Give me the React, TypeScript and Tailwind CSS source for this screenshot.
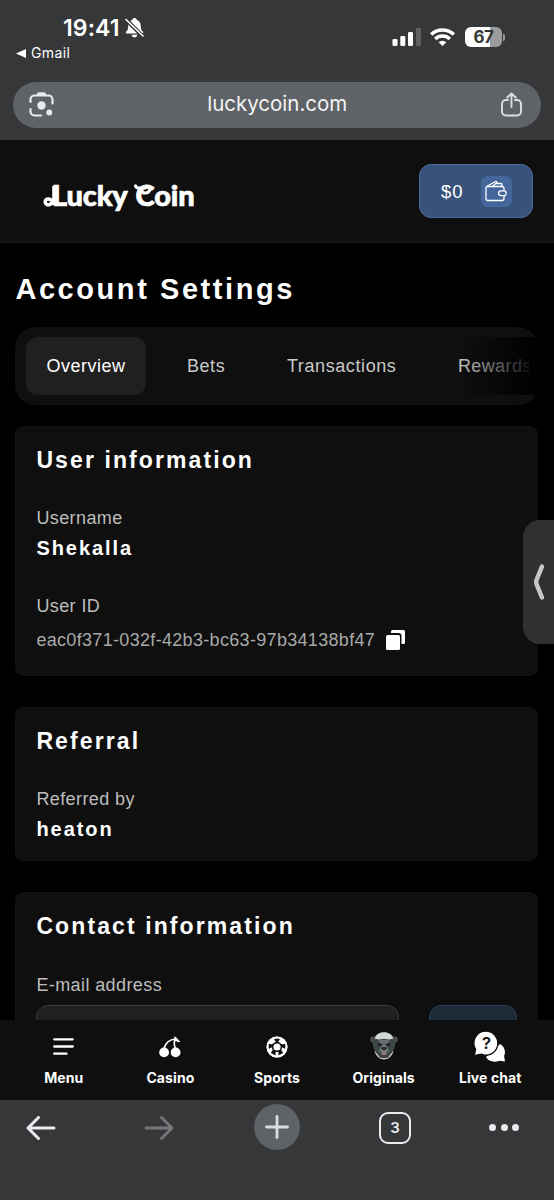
import type { ReactNode } from "react";

const BODY = "font-['Liberation_Sans',sans-serif]";

function StatusBar() {
  return (
    <div className="flex h-[81.500px] justify-between font-['Inter',sans-serif] text-white">
      <div className="pl-4 pt-[13px]">
        <div className="flex items-center pl-[47px]">
          <span className="w-[57px] text-[23px] font-semibold leading-[30px] tracking-[0.1px]">19:41</span>
          <svg className="ml-[5px]" width="19" height="20" viewBox="0 0 19 20">
            <path
              d="M9.5 0c1.1 0 2 .7 2.2 1.7 2.5.9 3.9 3 4 5.700.1 3.500.7 4.800 2.100 6.200.8.8.4 1.900-.7 1.900H1.900C.8 15.500.4 14.400 1.200 13.600c1.400-1.400 2-2.700 2.100-6.200.1-2.700 1.500-4.800 4-5.700C7.500.7 8.400 0 9.500 0zM6.700 16.800h5.600c-.2 1.700-1.300 2.800-2.800 2.800s-2.600-1.100-2.800-2.800z"
              fill="#fff"
            />
            <path d="M0.500 1L18 18.500" stroke="#363739" strokeWidth="4" />
            <path d="M1 1.500L18 18" stroke="#fff" strokeWidth="1.600" strokeLinecap="round" />
          </svg>
        </div>
        <div className="flex items-center text-[14px] leading-5">
          <svg width="10" height="9" viewBox="0 0 10 9">
            <path d="M0 4.500L10 0V9z" fill="#fff" />
          </svg>
          <span className="ml-[5px] tracking-[0.4px]">Gmail</span>
        </div>
      </div>

      <div className="mt-[27px] flex h-5 items-center pr-[49px]">
        <svg width="29" height="18" viewBox="0 0 29 18">
          <rect x="0.500" y="11" width="5" height="7" rx="1.300" fill="#fff" />
          <rect x="8.300" y="8" width="5" height="10" rx="1.300" fill="#fff" />
          <rect x="16" y="4" width="5" height="14" rx="1.300" fill="#fff" />
          <rect x="24" y="0" width="5" height="18" rx="1.300" fill="#5e5f61" />
        </svg>
        <svg className="ml-[9px]" width="25" height="18" viewBox="0 0 25 18">
          <g fill="none" stroke="#fff" strokeWidth="3.500">
            <path d="M1.200 6.600a16.200 16.200 0 0 1 22.600 0" />
            <path d="M5.200 11a10.400 10.400 0 0 1 14.600 0" />
          </g>
          <path d="M8.600 14.200a5.700 5.700 0 0 1 7.800 0l-3.900 3.800z" fill="#fff" />
        </svg>
        <div className="ml-[10px] flex h-5 w-[37px] items-center justify-center rounded-[6px] bg-linear-to-r from-white from-68% to-[#9b9c9e] to-68% pt-px text-[17px] font-bold tracking-[-0.5px] text-[#363739]">
          67
        </div>
        <div className="ml-px h-[7px] w-[2px] rounded-r-full bg-[#9b9c9e]" />
      </div>
    </div>
  );
}

function AddressBar() {
  return (
    <div className="mx-[13px] flex h-[46px] items-center justify-between rounded-full bg-[#5f6266] pl-4 pr-[19.500px]">
      <svg width="25" height="25" viewBox="0 0 25 25" fill="none">
        <g stroke="#e8eaee" strokeWidth="2.200" strokeLinecap="round">
          <path d="M1.500 10V7.500A4 4 0 0 1 5.500 3.500H19.500A4 4 0 0 1 23.500 7.500V11.500" />
          <path d="M1.500 17V19.500A4 4 0 0 0 5.500 23.500H12" />
        </g>
        <path d="M7.500 3l1-2q.4-.8 1.300-.8h5.400q.9 0 1.300.8l1 2z" fill="#e8eaee" />
        <circle cx="12.500" cy="13.500" r="4.200" fill="#e8eaee" />
        <circle cx="20.300" cy="20.500" r="2.900" fill="#e8eaee" />
      </svg>
      <span className="pb-px font-['Inter',sans-serif] text-[20.500px] text-[#f1f2f4]">luckycoin.com</span>
      <svg width="21" height="25" viewBox="0 0 21 25" fill="none" stroke="#dcdee2" strokeWidth="1.900" strokeLinecap="round" strokeLinejoin="round">
        <path d="M7 8H5a4 4 0 0 0-4 4v7.500a4 4 0 0 0 4 4h11a4 4 0 0 0 4-4V12a4 4 0 0 0-4-4h-2" />
        <path d="M10.500 15V1.500M6.300 5.500L10.500 1.300l4.200 4.200" />
      </svg>
    </div>
  );
}

function Logo() {
  return (
    <div className="relative flex items-baseline pl-[9px] font-['Lato',sans-serif] text-[29px] font-black leading-9 tracking-[-0.150px] text-white [-webkit-text-stroke:0.7px_white]">
      {/* Swash strokes that decorate the two capitals */}
      <svg className="absolute left-0 top-[6px]" width="150" height="26" viewBox="0 0 150 26" fill="none" stroke="#fff" strokeLinecap="round">
        <path d="M11 4V15C11 22 2.200 24 2.200 18.800C2.200 14.800 8 15 11.500 20.500" strokeWidth="3.600" />
        <path d="M92.500 3C94 6 98 5.500 100.500 4C104.500 1.800 108 4 106.500 7.500C105 10.500 100 11 98.500 8" strokeWidth="3.200" />
      </svg>
      <span>Lucky</span>
      <span className="ml-[8px]">Coin</span>
    </div>
  );
}

function SiteHeader() {
  return (
    <header className="flex h-[103px] shrink-0 items-center justify-between border-b border-[#191919] bg-[#0f0f0f] pl-[43px] pr-[21px]">
      <div className="pt-2">
        <Logo />
      </div>
      <button className="flex h-[54px] w-[114px] items-center justify-between rounded-[12px] border border-[#4e6d9c] bg-[#375379] pl-[21px] pr-[20.500px]">
        <span className={`${BODY} pt-px text-[18.500px] tracking-[1px] text-white`}>$0</span>
        <span className="flex size-[31px] items-center justify-center rounded-[7px] bg-[#45669a]">
          <svg width="22" height="22" viewBox="0 0 22 22" fill="none" stroke="#fff" strokeWidth="1.300" strokeLinejoin="round">
            <path d="M19 11V8.500a2 2 0 0 0-2-2H2.500a1.500 1.500 0 0 0-1.500 1.500V18.500a2 2 0 0 0 2 2H17a2 2 0 0 0 2-2V15.700" />
            <path d="M16 10.800h3.300a1.700 1.700 0 0 1 1.700 1.700v1.400a1.700 1.700 0 0 1-1.700 1.700H16a2.400 2.400 0 0 1 0-4.800z" />
            <path d="M2 6.300L10.500 1.500a1 1 0 0 1 1.300.5l.8 1.500M8 6.300l2.500-2.800h5.500a1 1 0 0 1 1 1v1.800" />
          </svg>
        </span>
      </button>
    </header>
  );
}

function Tabs() {
  return (
    <nav className={`${BODY} relative flex h-[78px] w-[522.500px] items-center overflow-hidden rounded-[20px] bg-[#0f0f0f] pl-[10.500px] text-[18px] text-[#c9c9c9]`}>
      <span className="flex h-[58px] w-[120px] shrink-0 items-center justify-center rounded-[12px] bg-[#202020] pt-px tracking-[0.500px] text-white">
        Overview
      </span>
      <span className="ml-[41px] w-[100px] shrink-0 pt-px tracking-[0.600px]">Bets</span>
      <span className="w-[171px] shrink-0 pt-px tracking-[0.600px]">Transactions</span>
      <span className="w-[71px] overflow-hidden pt-px tracking-[0.400px]">Rewards</span>
      <div className="absolute right-0 top-[10px] h-[58px] w-[80px] bg-linear-to-r from-transparent to-black" />
    </nav>
  );
}

function Card({ title, className, children }: { title: string; className: string; children: ReactNode }) {
  return (
    <section className={`${BODY} w-[523px] rounded-[8px] border border-[#111111] bg-[#0f0f0f] px-5 pt-[19px] ${className}`}>
      <h2 className="text-[23px] font-bold leading-7 tracking-[2.100px] text-white">{title}</h2>
      {children}
    </section>
  );
}

function Label({ children }: { children: ReactNode }) {
  return <div className="text-[18px] leading-6 tracking-[0.400px] text-[#bdbdbd]">{children}</div>;
}

function Value({ children }: { children: ReactNode }) {
  return <div className="mt-[6px] text-[20px] font-bold leading-6 tracking-[1.950px] text-white">{children}</div>;
}

function NavItem({ label, children }: { label: string; children: ReactNode }) {
  return (
    <div className="flex w-[106.600px] flex-col items-center">
      <div className="flex h-[34px] items-center justify-center">{children}</div>
      <span className="mt-[5px] whitespace-nowrap text-[14px] font-bold leading-[18px] tracking-[0.100px] text-white">{label}</span>
    </div>
  );
}

function BottomNav() {
  return (
    <nav className="flex h-20 shrink-0 justify-center bg-[#0f0f0f] pt-[10px] font-['Inter',sans-serif]">
      <NavItem label="Menu">
        <svg className="mb-[2px]" width="21" height="19" viewBox="0 0 21 19" stroke="#fff" strokeWidth="2.300" strokeLinecap="round">
          <path d="M1.200 2.300H19.800M1.200 9.500H19.800M1.200 16.700H13.500" />
        </svg>
      </NavItem>
      <NavItem label="Casino">
        <svg className="mb-px" width="22" height="22" viewBox="0 0 22 22" fill="#fff">
          <circle cx="5.100" cy="16.400" r="4.900" />
          <circle cx="16.600" cy="16.400" r="4.900" />
          <path d="M5 12.500C6.500 7 10.500 3.500 16.500 3M16.500 12.500C14.800 9 14.800 6 16.500 3" fill="none" stroke="#fff" strokeWidth="1.700" />
          <path d="M15.500 .3l1.800 1.200 4 4.200-1.900.6-4.400-2z" />
        </svg>
      </NavItem>
      <NavItem label="Sports">
        {/* Dark five-armed ring between the white centre and the white rim panels */}
        <svg className="mb-px" width="22" height="22" viewBox="0 0 22 22">
          <circle cx="11" cy="11" r="10.500" fill="#fff" />
          <path d="M11 5.300l5.400 3.900-2.100 6.400H7.700L5.600 9.200z" fill="#0f0f0f" stroke="#0f0f0f" strokeWidth="1" strokeLinejoin="round" />
          <path d="M7.800 2.500h6.400L12.500 5.500h-3zM2.700 7.800l3.400.7.300 2.500-4 2zM19.300 7.800l-3.400.7-.3 2.500 4 2zM4.800 17l2-3 2.500 1.200.4 4.200zM17.200 17l-2-3-2.500 1.200-.4 4.200z" fill="#0f0f0f" />
          <circle cx="11" cy="11" r="3.600" fill="#fff" />
          <circle cx="11" cy="11" r="9.600" fill="none" stroke="#fff" strokeWidth="1.800" />
        </svg>
      </NavItem>
      <NavItem label="Originals">
        <svg className="mb-[3px]" width="28" height="28" viewBox="0 0 28 28">
          <ellipse cx="2.800" cy="7.500" rx="2.500" ry="3" fill="#4b5153" />
          <ellipse cx="25.200" cy="7.500" rx="2.500" ry="3" fill="#4b5153" />
          <path d="M4.500 19c1.500 5.500 5 8.500 9.500 8.500s8-3 9.500-8.500z" fill="#c3bfb9" />
          <path d="M3 8C4 3 8 1 14 1s10 2 11 7c.8 5-.5 9.500-3 12.500L17.500 26h-7L6 20.500C3.500 17.500 2.200 13 3 8z" fill="#3e4547" />
          <path d="M4.500 6.500C7 1.500 10 .3 14 .3s7 1.200 9.500 6.200L19 7.500l-5-.8-5 .8z" fill="#d4d9d8" />
          <path d="M8 9q6-2.500 12 0l-2 3h-8z" fill="#697072" />
          <circle cx="9.500" cy="12.300" r="1.500" fill="#14191b" />
          <circle cx="18.500" cy="12.300" r="1.500" fill="#14191b" />
          <path d="M11 15l3-3 3 3 2 4-5 3-5-3z" fill="#737a7b" />
          <ellipse cx="14" cy="16.500" rx="2.800" ry="1.800" fill="#24292b" />
          <path d="M11 21q3-1.500 6 0L15.500 23h-3z" fill="#9b7677" />
        </svg>
      </NavItem>
      <NavItem label="Live chat">
        <svg width="32" height="32" viewBox="0 0 32 32">
          <path d="M12 26c2 4 8 6 13.500 3.700l5.500.9-.9-5.500c2-4.700.5-9.500-4.100-12.100z" fill="#fff" />
          <path
            d="M12.500 .2a12 12 0 1 1-5.400 23L.3 24.600l1.300-6.300A12 12 0 0 1 12.500 .2z"
            fill="#fff" stroke="#0f0f0f" strokeWidth="1.300"
          />
          <text x="12.500" y="18.200" textAnchor="middle" fontSize="16.500" fontWeight="600" fill="#0f0f0f">?</text>
        </svg>
      </NavItem>
    </nav>
  );
}

function BrowserBar() {
  return (
    <footer className="flex h-[100px] shrink-0 items-start bg-[#363739] pl-[26px] pt-1">
      <svg className="mt-3" width="30" height="24" viewBox="0 0 30 24" fill="none" stroke="#e8eaee" strokeWidth="3" strokeLinecap="round" strokeLinejoin="round">
        <path d="M28 12H2M12.500 1.500L2 12l10.500 10.500" />
      </svg>
      <svg className="ml-[88px] mt-3" width="30" height="24" viewBox="0 0 30 24" fill="none" stroke="#76777a" strokeWidth="2.800" strokeLinecap="round" strokeLinejoin="round">
        <path d="M2 12H28M17.500 1.500L28 12 17.500 22.500" />
      </svg>
      <div className="ml-[80px] flex size-[46px] items-center justify-center rounded-full bg-[#5f6266]">
        <svg width="24" height="24" viewBox="0 0 24 24" stroke="#dcdee2" strokeWidth="2.800" strokeLinecap="round">
          <path d="M12 1.500V22.500M1.500 12H22.500" />
        </svg>
      </div>
      <div className="ml-[79px] mt-[8px] flex size-[32px] items-center justify-center rounded-[9px] border-[2.500px] border-[#e8eaee] font-['Inter',sans-serif] text-[15px] font-semibold text-[#e8eaee]">
        3
      </div>
      <div className="ml-[78px] mt-5 flex gap-[4.500px]">
        <i className="size-[7px] rounded-full bg-[#e8eaee]" />
        <i className="size-[7px] rounded-full bg-[#e8eaee]" />
        <i className="size-[7px] rounded-full bg-[#e8eaee]" />
      </div>
    </footer>
  );
}

export default function App() {
  return (
    <div className="relative flex h-[1200px] w-[554px] flex-col overflow-hidden bg-black">
      <div className="h-[140px] shrink-0 bg-[#363739]">
        <StatusBar />
        <AddressBar />
      </div>
      <SiteHeader />

      <main className="min-h-0 flex-1 overflow-hidden pl-[15.400px]">
        <h1 className={`${BODY} mt-[28px] text-[29px] font-bold leading-9 tracking-[2.570px] text-white`}>Account Settings</h1>
        <div className="mt-[20px]">
          <Tabs />
        </div>

        <Card title="User information" className="mt-[21px] h-[250px]">
          <div className="mt-[32px]">
            <Label>Username</Label>
            <Value>Shekalla</Value>
          </div>
          <div className="mt-[34px]">
            <Label>User ID</Label>
            <div className="mt-[10px] flex items-center text-[18px] leading-6 tracking-[0.320px] text-[#a9a9a9]">
              <span>eac0f371-032f-42b3-bc63-97b34138bf47</span>
              <svg className="ml-[11px]" width="19" height="20" viewBox="0 0 19 20" fill="#fff">
                <path d="M5 3V1.500A1.500 1.500 0 0 1 6.500 0h11A1.500 1.500 0 0 1 19 1.500v11a1.500 1.500 0 0 1-1.500 1.500H15.500V6a3 3 0 0 0-3-3z" />
                <rect x="0" y="5" width="14" height="15" rx="1.500" />
              </svg>
            </div>
          </div>
        </Card>

        <Card title="Referral" className="mt-[31px] h-[154px]">
          <div className="mt-[32px]">
            <Label>Referred by</Label>
            <Value>heaton</Value>
          </div>
        </Card>

        <Card title="Contact information" className="mt-[31px] h-[200px]">
          <div className="mt-[33px]">
            <Label>E-mail address</Label>
          </div>
          <div className="mt-[8px] flex justify-between">
            <div className="h-[53px] w-[363px] rounded-[12px] border border-[#3b3b3b] bg-[#202020]" />
            <div className="h-[53px] w-[88px] rounded-[12px] border border-[#2a3e57] bg-[#1d2a38]" />
          </div>
        </Card>
      </main>

      <BottomNav />
      <BrowserBar />

      {/* Side drawer handle */}
      <div className="absolute right-0 top-[520px] flex h-[124px] w-[31px] items-center justify-center rounded-l-[17px] bg-[#303030]">
        <svg width="12" height="38" viewBox="0 0 12 38" fill="none" stroke="#c5c5ca" strokeWidth="4.500" strokeLinecap="round" strokeLinejoin="round">
          <path d="M9 3.500L3.500 17Q2.700 19 3.500 21L9 34.500" />
        </svg>
      </div>
    </div>
  );
}
